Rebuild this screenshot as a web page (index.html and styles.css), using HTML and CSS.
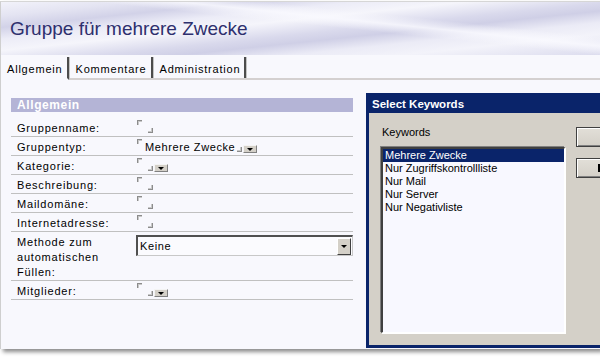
FILE: index.html
```html
<!DOCTYPE html>
<html lang="de">
<head>
    <meta charset="UTF-8">
    <title>Gruppe für mehrere Zwecke</title>
    <link rel="stylesheet" href="styles.css">
</head>
<body>

    <div class="page">
        <div class="banner">
            <h1 class="title">Gruppe für mehrere Zwecke</h1>
        </div>

        <!-- Tabs -->
        <div class="tabs">
            <div class="tab active">Allgemein</div>
            <div class="tab">Kommentare</div>
            <div class="tab">Administration</div>
        </div>

        <!-- Form section -->
        <div class="section">
            <div class="section-head">Allgemein</div>

            <div class="row first">
                <div class="label">Gruppenname:</div>
                <div class="field"><span class="mark-start"></span><span class="mark-end"></span></div>
            </div>
            <div class="row">
                <div class="label">Gruppentyp:</div>
                <div class="field">
                    <span class="mark-start"></span>
                    <span class="value">Mehrere Zwecke</span>
                    <span class="mark-end"></span>
                    <span class="drop"></span>
                </div>
            </div>
            <div class="row">
                <div class="label">Kategorie:</div>
                <div class="field"><span class="mark-start"></span><span class="mark-end"></span><span class="drop"></span></div>
            </div>
            <div class="row">
                <div class="label">Beschreibung:</div>
                <div class="field"><span class="mark-start"></span><span class="mark-end"></span></div>
            </div>
            <div class="row">
                <div class="label">Maildomäne:</div>
                <div class="field"><span class="mark-start"></span><span class="mark-end"></span></div>
            </div>
            <div class="row">
                <div class="label">Internetadresse:</div>
                <div class="field"><span class="mark-start"></span><span class="mark-end"></span></div>
            </div>
            <div class="row tall">
                <div class="label">Methode zum automatischen Füllen:</div>
                <div class="field">
                    <div class="select">
                        <span class="select-text">Keine</span>
                        <span class="select-btn"></span>
                    </div>
                </div>
            </div>
            <div class="row">
                <div class="label">Mitglieder:</div>
                <div class="field"><span class="mark-start"></span><span class="mark-end"></span><span class="drop"></span></div>
            </div>
        </div>
    </div>

    <!-- Select Keywords dialog -->
    <div class="dialog">
        <div class="dialog-title">Select Keywords</div>
        <div class="dialog-body">
            <div class="dialog-left">
                <div class="dialog-label">Keywords</div>
                <div class="listbox">
                    <div class="item selected">Mehrere Zwecke</div>
                    <div class="item">Nur Zugriffskontrollliste</div>
                    <div class="item">Nur Mail</div>
                    <div class="item">Nur Server</div>
                    <div class="item">Nur Negativliste</div>
                </div>
            </div>
            <div class="dialog-buttons">
                <button type="button" class="win-btn"></button>
                <button type="button" class="win-btn second"></button>
            </div>
        </div>
    </div>

</body>
</html>
```

FILE: styles.css
```css
body {
    margin: 0;
    width: 600px;
    height: 357px;
    overflow: hidden;
    background: #fff;
    font-family: 'Liberation Sans', Arial, sans-serif;
    position: relative;
}

.page {
    margin-top: 1px;
    width: 599px;
    height: 347px;
    border-top: 1px solid #d6d6d6;
    border-left: 1px solid #cfcfcf;
    background: #f8f8fd;
    box-shadow: 3px 3px 4px rgba(0, 0, 0, 0.45);
}

/* Header banner */
.banner {
    height: 53px;
    padding: 16px 0 0 9px;
    box-sizing: border-box;
    background:
        linear-gradient(186deg, rgba(255,255,255,0) 0%, rgba(255,255,255,0) 30%, rgba(250,250,255,0.8) 38%, rgba(255,255,255,0) 46%),
        linear-gradient(174deg, #f2f2fa 0%, #e4e4f2 12%, #d2d2e8 22%, #ececf7 32%, #f5f5fb 42%, #d9d9ec 55%, #cfcfe6 62%, #ebebf6 72%, #f3f3fa 82%, #dcdcee 100%);
}

.title {
    margin: 0;
    font-size: 19px;
    line-height: 22px;
    font-weight: normal;
    color: #2e2f6e;
}

/* Tabs */
.tabs {
    display: flex;
    height: 23px;
    border-bottom: 2px solid #d4d0d0;
}

.tab {
    display: flex;
    align-items: center;
    margin-top: 2px;
    padding: 2px 4px 0 7px;
    font-size: 11px;
    letter-spacing: 0.8px;
    color: #000;
    border-right: 2px solid #4c4c4c;
    box-shadow: 1px 0 0 #c4c4c4;
}

.tab.active {
    padding-left: 6px;
    margin-bottom: -2px;
    border-bottom: 2px solid #f8f8fd;
}

/* Form section */
.section {
    margin: 18px 0 0 10px;
    width: 342px;
}

.section-head {
    height: 14px;
    line-height: 14px;
    padding-left: 6px;
    background: #b4b4d6;
    color: #fff;
    font-size: 12px;
    font-weight: bold;
    letter-spacing: 0.6px;
}

.row {
    display: grid;
    grid-template-columns: 120px 1fr;
    padding: 2px 0 0 6px;
    border-bottom: 1px solid #c0c0c0;
    font-size: 11px;
    line-height: 16px;
}

.row.first {
    padding-top: 8px;
}

.row.tall {
    padding-top: 3px;
    line-height: 15px;
}

.label {
    letter-spacing: 0.8px;
    color: #000;
}

.field {
    display: flex;
    align-items: flex-start;
    height: 16px;
}

.mark-start {
    width: 4px;
    height: 4px;
    border-top: 1px solid #8c8c8c;
    border-left: 1px solid #8c8c8c;
    box-shadow: inset 1px 1px 0 #c8c8c8;
}

.mark-end {
    align-self: flex-end;
    width: 4px;
    height: 4px;
    margin: 0 0 3px 6px;
    border-right: 1px solid #8c8c8c;
    border-bottom: 1px solid #8c8c8c;
    box-shadow: inset -1px -1px 0 #c8c8c8;
}

.value {
    margin-left: 3px;
    letter-spacing: 0.6px;
    line-height: 17px;
}

.value + .mark-end {
    margin-left: 2px;
}

.drop {
    position: relative;
    align-self: flex-end;
    width: 12px;
    height: 6px;
    margin: 0 0 2px 1px;
    background: #d4d0c8;
    border-top: 1px solid #f4f4f4;
    border-left: 1px solid #f4f4f4;
    border-right: 1px solid #808080;
    border-bottom: 1px solid #808080;
}

.drop::after {
    content: "";
    position: absolute;
    left: 3px;
    top: 2px;
    border-left: 3px solid transparent;
    border-right: 3px solid transparent;
    border-top: 3px solid #000;
}

/* Combo box */
.select {
    display: flex;
    align-items: center;
    justify-content: space-between;
    width: 217px;
    height: 21px;
    margin-left: -1px;
    box-sizing: border-box;
    background: #fbfbfe;
    border-top: 2px solid #505050;
    border-left: 2px solid #505050;
    border-right: 1px solid #c8c8c8;
    border-bottom: 1px solid #c8c8c8;
}

.select-text {
    padding-left: 2px;
    letter-spacing: 0.6px;
}

.select-btn {
    position: relative;
    width: 12px;
    height: 15px;
    margin-right: 1px;
    background: #d4d0c8;
    border-top: 1px solid #fff;
    border-left: 1px solid #fff;
    border-right: 1px solid #404040;
    border-bottom: 1px solid #404040;
}

.select-btn::after {
    content: "";
    position: absolute;
    left: 3px;
    top: 6px;
    border-left: 3px solid transparent;
    border-right: 3px solid transparent;
    border-top: 3px solid #000;
}

/* Dialog window, cut off by the right edge */
.dialog {
    position: absolute;
    left: 366px;
    top: 93px;
    width: 234px;
    height: 255px;
    box-sizing: border-box;
    overflow: hidden;
    border: 3px solid #0a246a;
    border-right: none;
    background: #d4d0c8;
    font-size: 11px;
}

.dialog-title {
    height: 17px;
    line-height: 16px;
    padding-left: 3px;
    background: #0a246a;
    color: #fff;
    font-size: 11.5px;
    font-weight: bold;
}

.dialog-body {
    display: flex;
    padding-left: 12px;
}

.dialog-left {
    flex: 0 0 184px;
}

.dialog-label {
    margin-top: 13px;
    padding-left: 1px;
    line-height: 13px;
    color: #000;
}

.listbox {
    height: 186px;
    margin-top: 8px;
    box-sizing: border-box;
    background: #f8f8ff;
    border-top: 2px solid #404040;
    border-left: 2px solid #404040;
    border-right: 1px solid #fff;
    border-bottom: 1px solid #fff;
    box-shadow: 1px 1px 0 #fff, -1px -1px 0 #808080;
}

.item {
    height: 13px;
    line-height: 13px;
    padding-left: 2px;
    color: #000;
}

.item.selected {
    background: #0a246a;
    color: #fff;
}

.dialog-buttons {
    display: flex;
    flex-direction: column;
    flex: 0 0 75px;
    gap: 11px;
    margin: 14px 0 0 11px;
}

.win-btn {
    position: relative;
    width: 75px;
    height: 20px;
    padding: 0;
    background: linear-gradient(#e2dfd8, #d4d0c8);
    border: 1px solid #404040;
    box-shadow: inset 1px 1px 0 #fff, inset -1px -1px 0 #808080;
}

/* first stroke of the button caption, the rest lies past the edge */
.win-btn.second::after {
    content: "";
    position: absolute;
    left: 21px;
    top: 5px;
    width: 2px;
    height: 8px;
    background: #000;
}
```
